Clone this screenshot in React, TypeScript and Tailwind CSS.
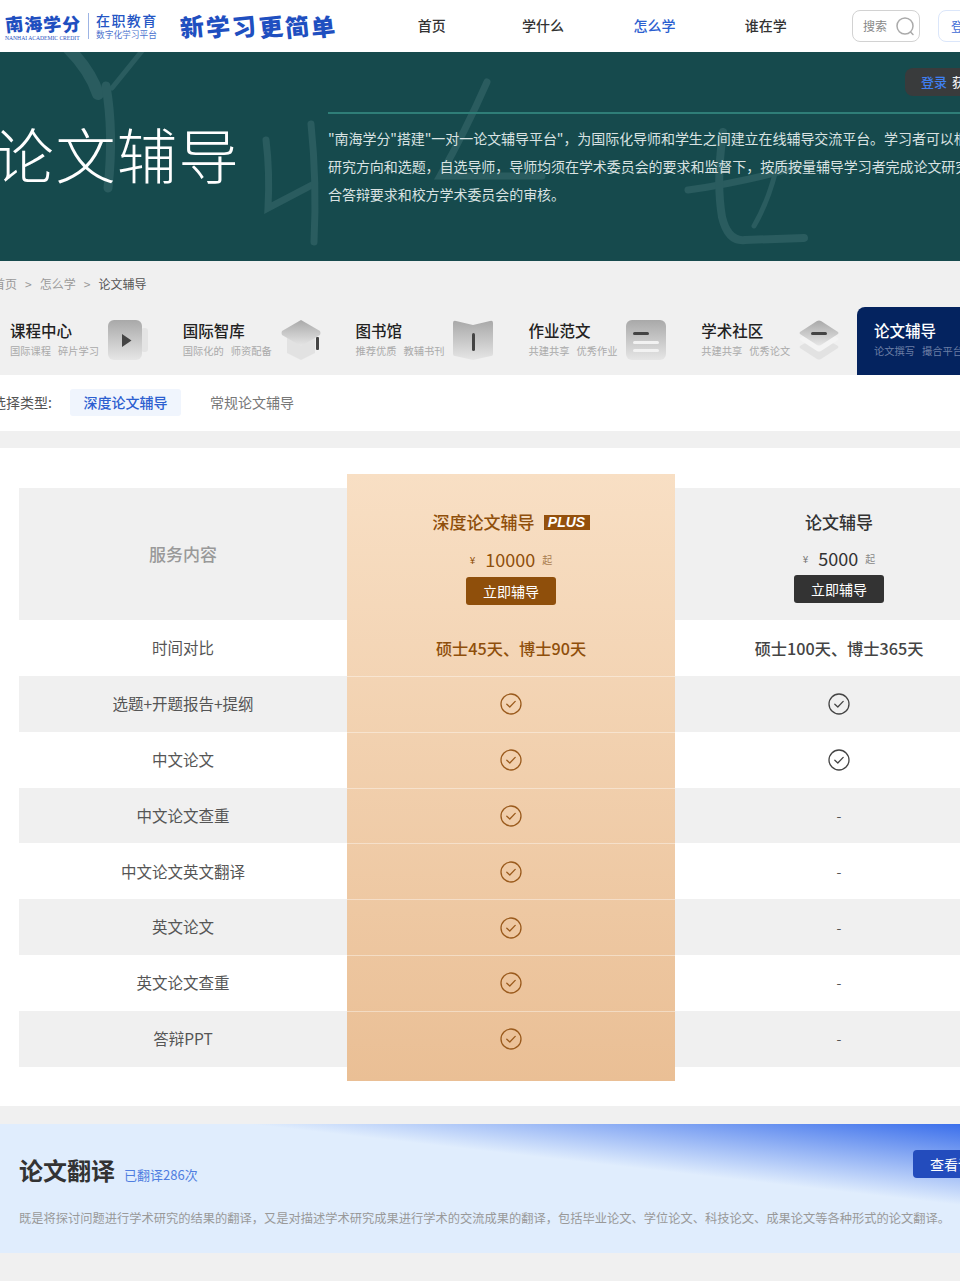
import React from "react";

const tabs = [
  { title: "课程中心", sub: ["国际课程", "碎片学习"], icon: "video" },
  { title: "国际智库", sub: ["国际化的", "师资配备"], icon: "cap" },
  { title: "图书馆", sub: ["推荐优质", "教辅书刊"], icon: "book" },
  { title: "作业范文", sub: ["共建共享", "优秀作业"], icon: "doc" },
  { title: "学术社区", sub: ["共建共享", "优秀论文"], icon: "layers" },
];

const services = [
  "选题+开题报告+提纲",
  "中文论文",
  "中文论文查重",
  "中文论文英文翻译",
  "英文论文",
  "英文论文查重",
  "答辩PPT",
];

const TabIcon: React.FC<{ name: string }> = ({ name }) => {
  const id = `grad-${name}`;
  return (
    <svg width="40" height="40" viewBox="0 0 40 40" className="mt-[13px] shrink-0">
      <defs>
        <linearGradient id={id} x1="0" y1="0" x2="0" y2="1">
          <stop offset="0" stopColor="#a9a9a9" />
          <stop offset="1" stopColor="#e6e6e6" />
        </linearGradient>
      </defs>
      {name === "video" && (
        <>
          <rect x="33" y="8" width="7" height="24" rx="3" fill="#e4e4e4" />
          <rect x="0" y="0" width="34" height="40" rx="6" fill={`url(#${id})`} />
          <path d="M14 14 L23.5 20.5 L14 27 Z" fill="#444" />
        </>
      )}
      {name === "cap" && (
        <>
          <path d="M6 16 H34 V33 L20 40 L6 33 Z" fill="#e2e2e2" />
          <path d="M1 11 L20 0 L39 11 Q40 13 39 15 L20 26 L1 15 Q0 13 1 11 Z" fill={`url(#${id})`} />
          <rect x="35" y="17" width="3" height="13" rx="1" fill="#444" />
        </>
      )}
      {name === "book" && (
        <>
          <path d="M0 3 Q0 0 3 1 L20 5 L37 1 Q40 0 40 3 V34 Q40 36 38 36 L20 40 L2 36 Q0 36 0 34 Z" fill={`url(#${id})`} />
          <rect x="19" y="13" width="3" height="18" rx="1.5" fill="#444" />
        </>
      )}
      {name === "doc" && (
        <>
          <rect x="0" y="0" width="40" height="40" rx="6" fill={`url(#${id})`} />
          <rect x="7" y="12" width="16" height="3" rx="1.5" fill="#444" />
          <rect x="7" y="21" width="26" height="3" rx="1.5" fill="#f2f2f2" />
          <rect x="7" y="29" width="26" height="3" rx="1.5" fill="#f2f2f2" />
        </>
      )}
      {name === "layers" && (
        <>
          <path d="M1 26 L18 16 Q20 15 22 16 L39 26 Q40 27 39 28 L22 39 Q20 40 18 39 L1 28 Q0 27 1 26 Z" fill="#e2e2e2" />
          <path d="M1 18 L18 8 Q20 7 22 8 L39 18 Q40 19 39 20 L22 31 Q20 32 18 31 L1 20 Q0 19 1 18 Z" fill="#f4f4f4" />
          <path d="M1 12 L18 1 Q20 0 22 1 L39 12 Q40 13 39 14 L22 25 Q20 26 18 25 L1 14 Q0 13 1 12 Z" fill={`url(#${id})`} />
          <rect x="12" y="12" width="16" height="3" rx="1.5" fill="#444" />
        </>
      )}
    </svg>
  );
};

const Check: React.FC<{ className: string }> = ({ className }) => (
  <svg width="22" height="22" viewBox="0 0 22 22" fill="none" className={className}>
    <circle cx="11" cy="11" r="10" stroke="currentColor" strokeWidth="1.3" />
    <path d="M6.8 11.2 L9.8 14 L15.2 8.4" stroke="currentColor" strokeWidth="1.3" strokeLinecap="round" strokeLinejoin="round" />
  </svg>
);

const Header = () => (
  <div className="flex h-[52px] items-center bg-white">
    <div className="ml-[5px] flex w-[75px] shrink-0 flex-col items-start">
      <div className="flex w-full justify-between text-[18px] leading-[24px] font-black text-[#1f4fc0]">
        {"南海学分".split("").map((c) => (
          <span key={c} className="inline-block -rotate-[6deg]">{c}</span>
        ))}
      </div>
      <div className="whitespace-nowrap font-['Liberation_Serif',serif] text-[5.6px] leading-[6px] text-[#1f4fc0]">NANHAI ACADEMIC CREDIT</div>
    </div>
    <div className="mr-[7px] ml-[8px] h-[26px] w-px shrink-0 bg-[#9db4e4]" />
    <div className="flex w-[62px] shrink-0 flex-col">
      <div className="whitespace-nowrap text-[14px] leading-[18px] font-medium tracking-[1.4px] text-[#2456c4]">在职教育</div>
      <div className="whitespace-nowrap text-[8.7px] leading-[12px] text-[#4d74cf]">数字化学习平台</div>
    </div>
    <div className="ml-[22px] flex w-[155px] shrink-0 justify-between text-[24px] leading-[30px] font-black text-[#1f4fc0]">
      {"新学习更简单".split("").map((c) => (
        <span key={c} className="inline-block -rotate-[6deg]">{c}</span>
      ))}
    </div>
    <div className="ml-[41px] flex w-[446px] shrink-0 items-center pb-[2px] text-[14px] font-medium text-[#333]">
      <span className="w-[111.4px] text-center">首页</span>
      <span className="w-[111.4px] text-center">学什么</span>
      <span className="w-[111.4px] text-center text-[#2c5fd0]">怎么学</span>
      <span className="w-[111.4px] text-center">谁在学</span>
    </div>
    <div className="ml-[30px] flex h-[32px] w-[68px] shrink-0 items-center justify-between rounded-lg border border-[#d2d2d2] pr-[4px] pl-[10px]">
      <span className="text-[12px] text-[#888]">搜索</span>
      <svg width="20" height="20" viewBox="0 0 20 20" fill="none">
        <circle cx="10" cy="10" r="8" stroke="#aaa" strokeWidth="1.5" />
        <path d="M15.5 16 L18 18.5" stroke="#aaa" strokeWidth="1.5" strokeLinecap="round" />
      </svg>
    </div>
    <div className="ml-[18px] flex h-[32px] w-[80px] shrink-0 items-center rounded-lg border border-[#dbe6fa] pl-[12px] text-[13px] whitespace-nowrap text-[#3d6bd6]">
      登录
    </div>
  </div>
);

const Hero = () => (
  <div className="relative flex h-[209px] overflow-hidden bg-[#164a4d]">
    <svg width="960" height="209" viewBox="0 0 960 209" fill="none" className="absolute top-0 left-0">
      <g stroke="#2a5c5f" strokeLinecap="round">
        <path d="M68 -4 Q90 18 98 42" strokeWidth="12" />
        <path d="M146 -6 L112 36" strokeWidth="5" />
        <path d="M106 34 Q114 80 108 136" strokeWidth="9" />
        <path d="M266 88 Q270 120 268 156 L312 133" strokeWidth="7" />
        <path d="M311 72 Q317 130 314 190" strokeWidth="7" />
        <path d="M487 30 Q465 80 440 124 L542 124" strokeWidth="7" />
        <path d="M688 138 Q745 130 800 114" strokeWidth="7" />
        <path d="M723 80 Q716 130 722 165 Q728 190 745 188 L804 186" strokeWidth="8" />
        <path d="M776 118 Q768 150 754 174" strokeWidth="5" />
      </g>
    </svg>
    <div className="relative z-10 -ml-[6px] w-[334px] shrink-0 pt-[56px] text-[60px] leading-[90px] font-extralight tracking-[1.5px] whitespace-nowrap text-white">
      论文辅导
    </div>
    <div className="relative z-10 flex-1 pt-[60px]">
      <div className="h-[2px] bg-[#2f7e78]" />
      <div className="mt-[10px] text-[14px] leading-[28px] tracking-[-0.06px] whitespace-nowrap text-[#d9e2e2]">
        <div>"南海学分"搭建"一对一论文辅导平台"，为国际化导师和学生之间建立在线辅导交流平台。学习者可以根据自己的</div>
        <div>研究方向和选题，自选导师，导师均须在学术委员会的要求和监督下，按质按量辅导学习者完成论文研究，并符</div>
        <div>合答辩要求和校方学术委员会的审核。</div>
      </div>
    </div>
    <div className="absolute top-[16px] right-0 z-20 flex h-[28px] w-[55px] items-center overflow-hidden rounded-l-lg bg-[#393b3c] pl-[16px] text-[13px] font-medium whitespace-nowrap">
      <span className="text-[#3f7ff0]">登录</span>
      <span className="ml-[5px] text-[#eee]">获取</span>
    </div>
  </div>
);

const TabText: React.FC<{ title: string; sub: string[]; active?: boolean }> = ({ title, sub, active }) => (
  <div className="pt-[12px]">
    <div className={`text-[15.5px] leading-[22px] font-medium whitespace-nowrap ${active ? "text-white" : "text-[#222]"}`}>{title}</div>
    <div className={`mt-[2px] flex gap-[7px] text-[10.25px] leading-[16px] whitespace-nowrap ${active ? "text-[#6d7fa5]" : "text-[#aaa]"}`}>
      <span>{sub[0]}</span>
      <span>{sub[1]}</span>
    </div>
  </div>
);

const Tabs = () => (
  <div className="-ml-[7px] flex h-[68px] w-[1100px]">
    {tabs.map((t) => (
      <div key={t.title} className="flex h-full w-[172.8px] shrink-0 items-start justify-between pr-[18px] pl-[17px]">
        <TabText title={t.title} sub={t.sub} />
        <TabIcon name={t.icon} />
      </div>
    ))}
    <div className="h-full w-[172.8px] shrink-0 rounded-tl-lg bg-[#04235f] pl-[17px]">
      <TabText title="论文辅导" sub={["论文撰写", "撮合平台"]} active />
    </div>
  </div>
);

const PriceTable = () => (
  <div className="mt-[17px] flex h-[658px] bg-white pt-[26px] pl-[19px]">
    {/* service names */}
    <div className="w-[328px] shrink-0 pt-[14px]">
      <div className="flex h-[132px] items-center justify-center bg-[#f0f0f0] text-[17px] font-medium text-[#999]">服务内容</div>
      <div className="flex h-[56px] items-center justify-center text-[15.5px] text-[#555]">时间对比</div>
      {services.map((s, i) => (
        <div key={s} className={`flex h-[55.8px] items-center justify-center text-[15.5px] text-[#555] ${i % 2 === 0 ? "bg-[#f0f0f0]" : "bg-white"}`}>
          {s}
        </div>
      ))}
    </div>

    {/* recommended column */}
    <div className="flex h-[607px] w-[328px] shrink-0 flex-col bg-[linear-gradient(180deg,#f8dfc4_0%,#eabf95_100%)] text-[#8f4f0b]">
      <div className="flex h-[146px] flex-col items-center pt-[37px]">
        <div className="flex h-[22px] items-center text-[17px] leading-[22px] font-medium">
          深度论文辅导
          <span className="ml-[9px] flex h-[15px] w-[46px] items-center justify-center bg-[#94500c] font-['Liberation_Sans',sans-serif] text-[14px] font-black text-white italic">
            PLUS
          </span>
        </div>
        <div className="mt-[13px] flex h-[26px] items-center">
          <span className="mr-[10px] text-[10px]">¥</span>
          <span className="mr-[7px] text-[18px]">10000</span>
          <span className="text-[10px] text-[#a97c4f]">起</span>
        </div>
        <div className="mt-[5px] flex h-[28px] w-[90px] items-center justify-center rounded-[3px] bg-[#8f4f0b] text-[14px] text-white">立即辅导</div>
      </div>
      <div className="flex h-[56px] items-center justify-center text-[16.2px] font-medium">硕士45天、博士90天</div>
      {services.map((s) => (
        <div key={s} className="flex h-[55.8px] items-center justify-center border-t border-white/40">
          <Check className="text-[#9a5a1c]" />
        </div>
      ))}
    </div>

    {/* regular column */}
    <div className="w-[328px] shrink-0 pt-[14px]">
      <div className="flex h-[132px] flex-col items-center bg-[#f0f0f0] pt-[23px] text-[#333]">
        <div className="h-[22px] text-[17px] leading-[22px] font-medium">论文辅导</div>
        <div className="mt-[12px] flex h-[26px] items-center">
          <span className="mr-[10px] text-[10px] text-[#777]">¥</span>
          <span className="mr-[7px] text-[18px]">5000</span>
          <span className="text-[10px] text-[#888]">起</span>
        </div>
        <div className="mt-[4px] flex h-[28px] w-[90px] items-center justify-center rounded-[3px] bg-[#333] text-[14px] text-white">立即辅导</div>
      </div>
      <div className="flex h-[56px] items-center justify-center text-[16.2px] font-medium text-[#444]">硕士100天、博士365天</div>
      {services.map((s, i) => (
        <div key={s} className={`flex h-[55.8px] items-center justify-center text-[14px] text-[#555] ${i % 2 === 0 ? "bg-[#f0f0f0]" : "bg-white"}`}>
          {i < 2 ? <Check className="text-[#444]" /> : "-"}
        </div>
      ))}
    </div>
  </div>
);

export default function App() {
  return (
    <div className="h-[1281px] w-[960px] overflow-hidden bg-[#f0f0f0] font-['Noto_Sans_CJK_SC',sans-serif]">
      <Header />
      <Hero />
      <div className="-ml-[7px] flex h-[46px] items-center text-[12px] whitespace-nowrap text-[#999]">
        <span>首页</span>
        <span className="mx-[8px]">&gt;</span>
        <span>怎么学</span>
        <span className="mx-[8px]">&gt;</span>
        <span className="text-[#555]">论文辅导</span>
      </div>
      <Tabs />
      <div className="flex h-[56px] items-center bg-white pb-[2px] text-[14px]">
        <span className="-ml-[8px] whitespace-nowrap text-[#555]">选择类型:</span>
        <span className="ml-[18px] flex h-[27px] w-[111px] items-center justify-center rounded-[3px] bg-[#f0f5fd] font-medium text-[#2c5fd0]">深度论文辅导</span>
        <span className="ml-[29px] text-[#777]">常规论文辅导</span>
      </div>
      <PriceTable />
      <div className="mt-[18px] flex h-[129px] flex-col bg-[linear-gradient(6.5deg,#e0edfd_66%,#3b6feb_100%)] pl-[19px]">
        <div className="flex items-start justify-between pt-[28px]">
          <div className="flex items-end">
            <span className="text-[24px] leading-[36px] font-bold text-[#333]">论文翻译</span>
            <span className="mb-[3px] ml-[9px] text-[13px] leading-[20px] text-[#4f7de0]">已翻译286次</span>
          </div>
          <div className="-mt-[2px] flex h-[28px] w-[47px] items-center overflow-hidden rounded-l-[4px] bg-[#234cbd] pl-[17px] text-[14px] whitespace-nowrap text-white">查看详情</div>
        </div>
        <div className="mt-[21px] text-[12.25px] leading-[18px] whitespace-nowrap text-[#999]">
          既是将探讨问题进行学术研究的结果的翻译，又是对描述学术研究成果进行学术的交流成果的翻译，包括毕业论文、学位论文、科技论文、成果论文等各种形式的论文翻译。
        </div>
      </div>
    </div>
  );
}
